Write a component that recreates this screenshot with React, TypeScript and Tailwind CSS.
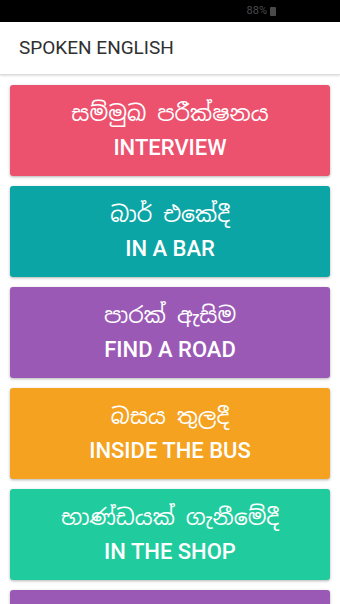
const cards = [
  { si: "සම්මුඛ පරීක්ෂනය", en: "INTERVIEW", bg: "bg-[#ec516d]" },
  { si: "බාර් එකේදී", en: "IN A BAR", bg: "bg-[#0ba5a6]" },
  { si: "පාරක් ඇසිම", en: "FIND A ROAD", bg: "bg-[#9b59b6]" },
  { si: "බසය තුලදී", en: "INSIDE THE BUS", bg: "bg-[#f5a220]" },
  { si: "භාණ්ඩයක් ගැනීමේදී", en: "IN THE SHOP", bg: "bg-[#20cc9d]" },
  { si: "අවසර ඉල්ලීම", en: "ASK PERMISSION", bg: "bg-[#9b59b6]" },
];

export default function App() {
  return (
    <div className="h-[604px] w-[340px] overflow-hidden bg-white font-['Roboto',sans-serif]">
      <div className="flex h-[22px] items-center justify-end bg-black pr-[64px]">
        <span className="text-[11px] text-[#4a4a4a]">88%</span>
        <div className="ml-[3px] h-[9px] w-[6px] rounded-[1px] bg-[#4a4a4a]" />
      </div>
      <div className="flex h-[53px] items-center border-b border-[#dcdcdc] px-[19px] shadow-[0_1px_2px_rgba(0,0,0,0.12)]">
        <h1 className="text-[19px] text-[#303030]">SPOKEN ENGLISH</h1>
      </div>
      <div className="flex flex-col gap-[10px] px-[10px] pt-[10px]">
        {cards.map((c) => (
          <div
            key={c.en}
            className={`flex h-[91px] shrink-0 flex-col items-center rounded-[3px] pt-[13px] text-white shadow-[0_1px_3px_rgba(0,0,0,0.3)] ${c.bg}`}
          >
            <p className="text-[22px] leading-[30px] font-['Noto_Sans_Sinhala','Noto_Sans',sans-serif]">{c.si}</p>
            <p className="mt-[5px] text-[22px] font-medium leading-[30px]">{c.en}</p>
          </div>
        ))}
      </div>
    </div>
  );
}
